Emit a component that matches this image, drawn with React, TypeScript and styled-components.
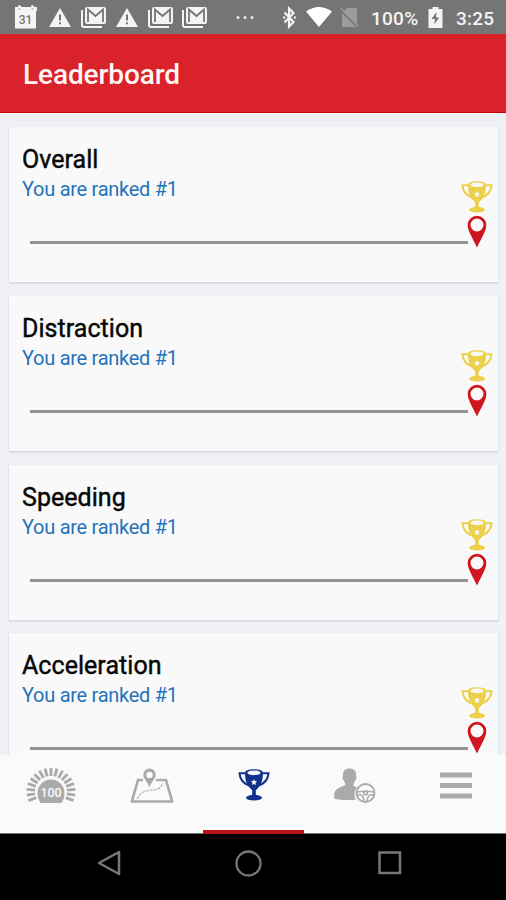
import React from 'react';
import styled, { createGlobalStyle } from 'styled-components';

const GlobalStyle = createGlobalStyle`
  * { box-sizing: border-box; }
  body { margin: 0; background: #f1f0f5; font-family: Roboto, sans-serif; }
`;

const Screen = styled.div`
  width: 506px;
  height: 900px;
  display: flex;
  flex-direction: column;
  overflow: hidden;
  background: #f1f0f5;
`;

const StatusBar = styled.div`
  height: 34px;
  flex: none;
  display: flex;
  background: #757575;
  color: #f4f4f4;
`;

const StatusIcon = styled.svg<{ $gap: number }>`
  display: block;
  flex: none;
  height: 34px;
  margin-left: ${(p) => p.$gap}px;
`;

const StatusText = styled.span<{ $gap: number; $width: number }>`
  flex: none;
  width: ${(p) => p.$width}px;
  margin-left: ${(p) => p.$gap}px;
  font-size: 19px;
  font-weight: 500;
  line-height: 37px;
  letter-spacing: 0.25px;
  white-space: nowrap;
`;

const Header = styled.header`
  height: 79px;
  flex: none;
  display: flex;
  align-items: center;
  padding: 3px 23px 0;
  background: #d9222a;
  border-bottom: 1px solid #c9040c;
`;

const Title = styled.h1`
  margin: 0;
  color: #fff5f5;
  font-size: 28px;
  font-weight: 500;
  line-height: 32px;
  letter-spacing: -0.1px;
`;

const Content = styled.main`
  height: 642px;
  flex: none;
  display: flex;
  flex-direction: column;
  gap: 13.8px;
  overflow: hidden;
  padding: 14px 8px 0 9px;
`;

const Card = styled.section`
  height: 155px;
  flex: none;
  padding: 17px 5px 0 13px;
  background: #f9f9f9;
  box-shadow: 0 1px 2px #c9c9da;
`;

const CardTitle = styled.h2`
  margin: 0;
  color: #080808;
  font-size: 25px;
  font-weight: 400;
  line-height: 31px;
  letter-spacing: 0.05px;
  -webkit-text-stroke: 0.45px #080808;
`;

const Rank = styled.p`
  margin: 0;
  color: #2573bb;
  font-size: 20px;
  line-height: 29px;
  letter-spacing: -0.28px;
`;

const Track = styled.div`
  display: flex;
  padding-left: 8px;
  margin-top: -24px;
`;

const Line = styled.div`
  flex: 1;
  height: 3px;
  margin-top: 61px;
  background: #929292;
`;

const Marker = styled.div`
  width: 32px;
  margin-left: -7px;
  display: flex;
  flex-direction: column;
  align-items: center;
  gap: 2px;
`;

const Icon = styled.svg`
  display: block;
  flex: none;
`;

const TabBar = styled.nav`
  height: 79px;
  flex: none;
  display: grid;
  grid-template-columns: 101px 102px 101px 101px 101px;
  background: #fafafa;
  border-bottom: 1px solid #777;
`;

const Tab = styled.div<{ $active?: boolean }>`
  display: flex;
  justify-content: center;
  height: 79px;
  padding-top: ${(p) => (p.$active ? 13 : 10)}px;
  color: #aaa;
  border-bottom: ${(p) => (p.$active ? '4px solid #bb1118' : 'none')};
`;

const SystemNav = styled.div`
  height: 66px;
  flex: none;
  display: flex;
  align-items: flex-start;
  gap: 111px;
  padding: 14px 0 0 94px;
  background: #000;
`;

const Calendar = () => (
  <StatusIcon $gap={14} width="24" viewBox="14 0 24 34">
    <path d="M15 7h3V5.500h3V7h10V5.500h3V7h3v4h-1v17.500H15z" fill="#f4f4f4" />
    <path d="M18.500 9h2M31.500 9h2" stroke="#999" />
    <text x="25.500" y="23.500" textAnchor="middle" fontSize="12" fontWeight="500" fill="#757575" fontFamily="Roboto">31</text>
  </StatusIcon>
);

const Warning = ({ gap }: { gap: number }) => (
  <StatusIcon $gap={gap} width="22" viewBox="0 0 22 34">
    <path d="M11 8 22 27H0z" fill="#f4f4f4" />
    <path d="M11 14.500v6M11 22.200v2" stroke="#757575" strokeWidth="2" />
  </StatusIcon>
);

const Mail = ({ gap }: { gap: number }) => (
  <StatusIcon $gap={gap} width="26" viewBox="0 0 26 34">
    <path d="M1 10v15q0 2 2 2h18" fill="none" stroke="#f4f4f4" strokeWidth="2" />
    <rect x="4" y="7" width="21" height="17" rx="2" fill="#f4f4f4" />
    <path d="M7 22V9.500l7.500 6.500L22 9.500V22" fill="none" stroke="#757575" strokeWidth="1.800" />
  </StatusIcon>
);

const Trophy = ({ color }: { color: string }) => (
  <Icon width="32" height="33" viewBox="0 0 32 33" fill="none" stroke={color}>
    <path d="M7.500 5.300H1.500C2 11.500 5.500 15.500 11.500 17.500M24.500 5.300h6C30 11.500 26.500 15.500 20.500 17.500" strokeWidth="2" />
    <path fillRule="evenodd" stroke="none" fill={color} d="M7 4.500C7 0 25 0 25 4.500c0 7-1.300 12.500-5.500 16l-1.700 1.800v5h-3.600v-5l-1.700-1.800C8.300 17 7 11.500 7 4.500zm2.500.3c0 3.200 13 3.200 13 0s-13-3.200-13 0zM16 11l-.9 2-2.200.3 1.600 1.500-.4 2.200 1.900-1.100 1.900 1.100-.4-2.200 1.600-1.500-2.200-.3z" />
    <ellipse cx="16" cy="29.800" rx="8" ry="2.800" fill={color} stroke="none" />
    <path d="M12 28q4-3 8 0" fill={color} />
  </Icon>
);

const Pin = () => (
  <Icon width="20" height="33" viewBox="0 0 20 33">
    <path fillRule="evenodd" fill="#cf151d" d="M10 .8a9.300 9.300 0 0 1 9.300 9.300c0 5.500-3.500 10.500-9.300 22.400C4.200 20.600.7 15.600.7 10.100A9.300 9.300 0 0 1 10 .8zm0 2.700a6.500 6.500 0 1 0 0 13 6.500 6.500 0 0 0 0-13z" />
  </Icon>
);

const rays = Array.from({ length: 17 }, (_, i) => {
  const a = ((-203 + i * 14.125) * Math.PI) / 180;
  return {
    x1: 25 + 16 * Math.cos(a),
    y1: 26.5 + 15.5 * Math.sin(a),
    x2: 25 + 24.5 * Math.cos(a),
    y2: 26.5 + 23.5 * Math.sin(a),
  };
});

const Score = () => (
  <Icon width="50" height="42" viewBox="0 0 50 42">
    {rays.map((r, i) => (
      <line key={i} {...r} stroke="#aaa" strokeWidth="2.900" />
    ))}
    <path d="M14.500 38C12.500 35 11.500 32 11.500 28a13.500 13.500 0 0 1 27 0c0 4-1 7-3 10z" fill="#aaa" />
    <text x="25" y="32" textAnchor="middle" fontSize="13.500" fontWeight="500" fill="#fafafa" fontFamily="Roboto" textLength="21" lengthAdjust="spacingAndGlyphs">100</text>
  </Icon>
);

const MapIcon = () => (
  <Icon width="44" height="42" viewBox="0 0 44 42" fill="none" stroke="#aaa">
    <path d="M13 15H8L1.800 36.500h40.400L36 15H26" strokeWidth="2.700" strokeLinejoin="round" />
    <path d="M7 34c5-9 10-8 14-9 6 0 9-1 12-7" strokeWidth="1.100" strokeDasharray="3 1" />
    <path fillRule="evenodd" stroke="none" fill="#aaa" d="M19.500 3.500a6.200 6.200 0 0 1 6.200 6.200c0 4-3.200 5.300-6.200 12.300-3-7-6.200-8.300-6.200-12.300a6.200 6.200 0 0 1 6.200-6.200zm0 3.200a3.200 3.200 0 1 0 0 6.400 3.200 3.200 0 0 0 0-6.400z" />
  </Icon>
);

const Driver = () => (
  <Icon width="42" height="42" viewBox="0 0 42 42">
    <path fill="#aaa" d="M15.500 3.500c5 0 7 3 6.500 7.500 1 1 .3 4-1.200 4.700-.4 2-1 2.800-1.500 3.500 0 2.200 1.500 2.300 4 3.200-3 3-3.800 7.500-1.500 12.300-9 .8-17 .3-21.300-1C-.8 27 1 24.500 7.500 21.500c3-.9 4-1 3.800-3-.6-.7-1.100-1.600-1.300-3-1.500-.9-2-3.700-1-4.500-.5-4.500 1.500-7.500 6.500-7.500z" />
    <g fill="none" stroke="#aaa">
      <circle cx="31.500" cy="28" r="9" strokeWidth="1.900" />
      <path d="M23 27c5-1 12-1 17 0M23 30c5-1 6.500 1 7 6.500M40 30c-5-1-6.500 1-7 6.500" strokeWidth="1.500" />
      <circle cx="31.500" cy="28" r="1.800" strokeWidth="1.600" />
    </g>
  </Icon>
);

const Menu = () => (
  <Icon width="32" height="42" viewBox="0 0 32 42">
    <path d="M0 10h32M0 20.500h32M0 31h32" stroke="#aaa" strokeWidth="5" />
  </Icon>
);

const categories = ['Overall', 'Distraction', 'Speeding', 'Acceleration'];

export default function App() {
  return (
    <Screen>
      <GlobalStyle />
      <StatusBar>
        <Calendar />
        <Warning gap={11} />
        <Mail gap={10} />
        <Warning gap={9} />
        <Mail gap={10} />
        <Mail gap={8} />
        <StatusIcon $gap={28} width="20" viewBox="0 0 20 34" fill="#e8e8e8">
          <circle cx="2" cy="17.500" r="1.500" />
          <circle cx="9" cy="17.500" r="1.500" />
          <circle cx="16" cy="17.500" r="1.500" />
        </StatusIcon>
        <StatusIcon $gap={27} width="14" viewBox="0 0 14 34" fill="none" stroke="#f4f4f4">
          <path d="m1.500 12.500 9 9.500-4.500 4.500V8.500l4.500 4.500-9 9.500" strokeWidth="2.200" />
          <path d="M0 17.500h2.200M10.800 17.500H13" strokeWidth="2" />
        </StatusIcon>
        <StatusIcon $gap={9} width="26" viewBox="0 0 26 34">
          <path d="M0 11.500Q13 2.500 26 11.500L13 27z" fill="#fff" />
        </StatusIcon>
        <StatusIcon $gap={8} width="20" viewBox="0 0 20 34">
          <path d="M2 13 7 8h10v19H2z" fill="#9c9c9c" />
          <path d="M0 9.500 18 27.500" stroke="#757575" strokeWidth="2" />
          <path d="M.5 8 18.500 26.500" stroke="#9c9c9c" strokeWidth="1.500" />
        </StatusIcon>
        <StatusText $gap={11} $width={48}>100%</StatusText>
        <StatusIcon $gap={9} width="15" viewBox="0 0 15 34">
          <path d="M4.500 9V7h6v2h4v19h-14V9z" fill="#f4f4f4" />
          <path d="m8.500 12-5 7H7l-.8 5.500 5-7H8z" fill="#757575" />
        </StatusIcon>
        <StatusText $gap={13} $width={41}>3:25</StatusText>
      </StatusBar>
      <Header>
        <Title>Leaderboard</Title>
      </Header>
      <Content>
        {categories.map((name) => (
          <Card key={name}>
            <CardTitle>{name}</CardTitle>
            <Rank>You are ranked #1</Rank>
            <Track>
              <Line />
              <Marker>
                <Trophy color="#edd04a" />
                <Pin />
              </Marker>
            </Track>
          </Card>
        ))}
      </Content>
      <TabBar>
        <Tab><Score /></Tab>
        <Tab><MapIcon /></Tab>
        <Tab $active><Trophy color="#12318a" /></Tab>
        <Tab><Driver /></Tab>
        <Tab><Menu /></Tab>
      </TabBar>
      <SystemNav>
        <Icon width="28" height="30" viewBox="0 0 28 30">
          <path d="M25 4v22L5 15z" fill="none" stroke="#777" strokeWidth="2.500" strokeLinejoin="round" />
        </Icon>
        <Icon width="30" height="30" viewBox="0 0 30 30">
          <circle cx="15.500" cy="15.500" r="12" fill="none" stroke="#777" strokeWidth="2.300" />
        </Icon>
        <Icon width="30" height="30" viewBox="0 0 30 30">
          <rect x="5.500" y="4.500" width="20.500" height="20.500" fill="none" stroke="#777" strokeWidth="2.500" />
        </Icon>
      </SystemNav>
    </Screen>
  );
}
